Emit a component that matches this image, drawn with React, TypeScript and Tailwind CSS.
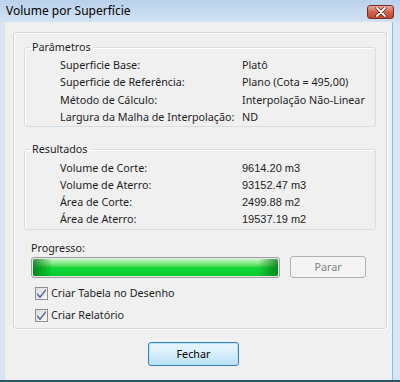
import React from "react";

const F = { fontFamily: '"Noto Sans", "Open Sans", sans-serif' };

function Row({ label, value, num }: { label: string; value: string; num?: boolean }) {
  return (
    <div className="flex h-[17.5px] items-center whitespace-nowrap">
      <div className="w-[217px] shrink-0 pl-[35px] text-[10.75px] text-[#1e1e1e]">{label}</div>
      <div
        className="text-[10.75px] text-[#1e1e1e]"
        style={num ? { fontFamily: '"Liberation Sans", Arial, sans-serif', fontSize: "11px" } : undefined}
      >
        {value}
      </div>
    </div>
  );
}

function Check({ label }: { label: string }) {
  return (
    <div className="flex items-center h-[22px]">
      <div className="ml-[4px] w-[13px] h-[13px] border border-[#8e8f8f] bg-gradient-to-br from-[#dcdcdc] to-[#fbfbfb] flex items-center justify-center">
        <svg width="11" height="11" viewBox="0 0 11 11">
          <path d="M1.5 5.5 L4 8.5 L9.5 1.5 L9.5 3 L4 10 L1.5 7 Z" fill="#4a5f97" stroke="#4a5f97" strokeWidth="0.6" strokeLinejoin="round" />
        </svg>
      </div>
      <span className="ml-[3px] text-[10.75px] text-[#1e1e1e]">{label}</span>
    </div>
  );
}

export default function App() {
  return (
    <div className="w-[400px] h-[382px] bg-[#d9e5f3] flex flex-col overflow-hidden" style={F}>
      {/* title bar */}
      <div className="h-[22px] flex items-center pl-[6px] pr-[5px] bg-gradient-to-b from-[#b9d1ec] to-[#d3e2f4] shrink-0">
        <span className="text-[12px] text-black leading-none">Volume por Superfície</span>
        <div className="ml-auto mr-[1px] mt-[1px] w-[27px] h-[14px] rounded-[3px] border border-[#7b2c22] bg-gradient-to-b from-[#e8a899] via-[#d0644c] to-[#c4442a] flex items-center justify-center">
          <svg width="12" height="10" viewBox="0 0 12 10">
            <path d="M2 1 L10 9 M10 1 L2 9" stroke="#5a2218" strokeWidth="3.2" strokeLinecap="round" />
            <path d="M2 1 L10 9 M10 1 L2 9" stroke="#ffffff" strokeWidth="1.8" strokeLinecap="round" />
          </svg>
        </div>
      </div>
      {/* body */}
      <div className="flex flex-1 min-h-0">
        <div className="w-[5px] shrink-0" />
        <div className="flex-1 bg-[#f0f0f0] flex flex-col border-r border-[#86c1e6]">
          {/* panel */}
          <div className="mt-[10px] ml-[8px] mr-[5px] h-[297px] rounded-[3px] border border-[#d6d6d6] shadow-[inset_1px_1px_0_#ffffff,1px_1px_0_#ffffff] px-[10px] flex flex-col">
            <fieldset className="mt-[6px] border border-[#d5dfe5] rounded-[3px] shadow-[inset_1px_1px_0_#fff] h-[88px]">
              <legend className="ml-[5px] px-[2px] text-[10.75px] text-[#1e1e1e] leading-[16px]">Parâmetros</legend>
              <div className="mt-[1px]">
                <Row label="Superficie Base:" value="Platô" />
                <Row label="Superficie de Referência:" value="Plano (Cota = 495,00)" />
                <Row label="Método de Cálculo:" value="Interpolação Não-Linear" />
                <Row label="Largura da Malha de Interpolação:" value="ND" />
              </div>
            </fieldset>
            <fieldset className="mt-[14px] border border-[#d5dfe5] rounded-[3px] shadow-[inset_1px_1px_0_#fff] h-[89px]">
              <legend className="ml-[5px] px-[2px] text-[10.75px] text-[#1e1e1e] leading-[16px]">Resultados</legend>
              <div className="mt-[2px]">
                <div className="h-[17px]"><Row label="Volume de Corte:" value="9614.20 m3" num /></div>
                <div className="h-[17px]"><Row label="Volume de Aterro:" value="93152.47 m3" num /></div>
                <div className="h-[17px]"><Row label="Área de Corte:" value="2499.88 m2" num /></div>
                <div className="h-[17px]"><Row label="Área de Aterro:" value="19537.19 m2" num /></div>
              </div>
            </fieldset>
            <div className="mt-[10px] pl-[7px] text-[10.75px] text-[#1e1e1e] leading-[16px]">Progresso:</div>
            <div className="pl-[7px] flex items-center">
              <div className="w-[249px] h-[21px] rounded-[3px] border border-[#9f9f9f] p-[1px] bg-[#e6e6e6]">
                <div className="w-full h-full rounded-[2px] relative overflow-hidden bg-gradient-to-b from-[#c4f8c4] via-[#14d63a] to-[#06cc2c]">
                  <div className="absolute inset-0" style={{ backgroundImage: "linear-gradient(to right, rgba(0,110,20,0.75), rgba(0,0,0,0) 8%, rgba(0,0,0,0) 92%, rgba(0,110,20,0.75))" }} />
                </div>
              </div>
              <div className="ml-[10px] w-[76px] h-[22px] rounded-[3px] border border-[#adb2b5] bg-[#f4f4f4] flex items-center justify-center text-[10.75px] text-[#838383]">
                Parar
              </div>
            </div>
            <div className="mt-[4px] pl-[7px] flex flex-col">
              <Check label="Criar Tabela no Desenho" />
              <Check label="Criar Relatório" />
            </div>
          </div>
          {/* footer */}
          <div className="flex justify-center pr-[10px] mt-[13px]">
            <div className="w-[91px] h-[24px] rounded-[3px] border border-[#3c7fb1] bg-gradient-to-b from-[#e8f5fd] via-[#d7eefc] to-[#b9e0f8] shadow-[inset_0_0_0_1px_#b8e4f8] flex items-center justify-center text-[10.75px] text-black">
              Fechar
            </div>
          </div>
        </div>
        <div className="w-[7px] shrink-0 bg-[#d6e6f5]" />
      </div>
      <div className="h-[2px] bg-[#2b5566] shrink-0" />
    </div>
  );
}
